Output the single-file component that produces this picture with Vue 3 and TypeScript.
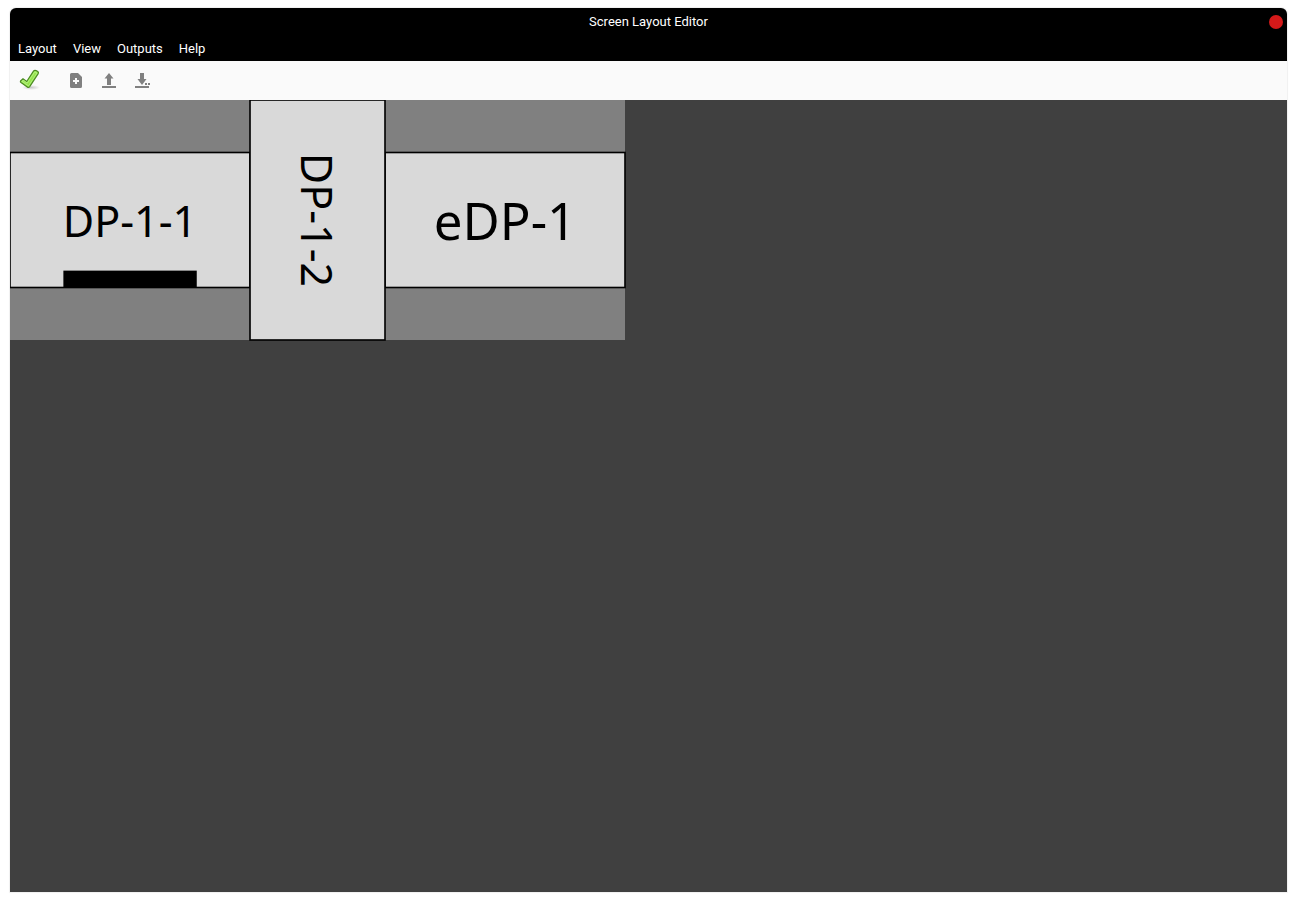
<script setup lang="ts">
interface Output {
  name: string
  x: number
  y: number
  width: number
  height: number
  rotated: boolean
  primary: boolean
  size: 'regular' | 'large'
  baseline: number
}

const menus: string[] = ['Layout', 'View', 'Outputs', 'Help']

// Coordinates are in real screen pixels; the canvas shows them at 1:8.
const outputs: Output[] = [
  { name: 'DP-1-1', x: 0, y: 420, width: 1920, height: 1080, rotated: false, primary: true, size: 'regular', baseline: 136 },
  { name: 'eDP-1', x: 3000, y: 420, width: 1920, height: 1080, rotated: false, primary: false, size: 'large', baseline: 160 },
  { name: 'DP-1-2', x: 1920, y: 0, width: 1080, height: 1920, rotated: true, primary: false, size: 'regular', baseline: 136 },
]

function place(o: Output): string {
  const move = `translate(${o.x + o.width / 2} ${o.y + o.height / 2})`
  return o.rotated ? `${move} rotate(90)` : move
}
</script>

<template>
  <div class="window">
    <header class="titlebar">
      <h1 class="title">Screen Layout Editor</h1>
      <button class="close" type="button" aria-label="Close"></button>
    </header>

    <nav class="menubar">
      <button v-for="menu in menus" :key="menu" class="menu" type="button">{{ menu }}</button>
    </nav>

    <div class="toolbar" role="toolbar">
      <button class="tool apply" type="button" aria-label="Apply">
        <svg width="24" height="24" viewBox="0 0 24 24">
          <defs>
            <radialGradient id="shade">
              <stop offset="0" stop-color="#000" stop-opacity=".2" />
              <stop offset="1" stop-color="#000" stop-opacity="0" />
            </radialGradient>
            <linearGradient id="leaf" x1="0" y1="0" x2="1" y2="1">
              <stop offset="0" stop-color="#a8ec68" />
              <stop offset="1" stop-color="#84dc35" />
            </linearGradient>
          </defs>
          <ellipse cx="13" cy="19.5" rx="9" ry="2.5" fill="url(#shade)" />
          <path d="M2.5 13 L5 10.7 L8.7 13.5 L15.5 3.2 Q16.3 2 18 2.5 L19.8 3.5 Q20.9 4.3 20.2 5.6 L11.7 18.6 Q10.7 20 9.3 19 L3 14.5 Q2 13.7 2.5 13Z" fill="url(#leaf)" stroke="#4a8a22" stroke-width="1.2" />
          <path d="M4 13.3 L5.2 12.1 L9.2 15.2 L16.7 3.9 L19 5 L10.5 17.9 L4 13.3Z" fill="none" stroke="#c0f592" stroke-width=".7" />
        </svg>
      </button>
      <button class="tool" type="button" aria-label="New">
        <svg width="24" height="24" viewBox="0 0 24 24">
          <path fill="#808080" fill-rule="evenodd" d="M7.5 5H14L18 9V18.5Q18 20 16.5 20H7.5Q6 20 6 18.5V6.5Q6 5 7.5 5ZM11 10V12H9V14H11V16H13V14H15V12H13V10Z" />
        </svg>
      </button>
      <button class="tool" type="button" aria-label="Open">
        <svg width="24" height="24" viewBox="0 0 24 24">
          <path fill="#808080" d="M12 5L16.5 10.5H14V17H10V10.500H7.5ZM5 18H19V20H5Z" />
        </svg>
      </button>
      <button class="tool" type="button" aria-label="Save as">
        <svg width="24" height="24" viewBox="0 0 24 24">
          <path fill="#808080" d="M10 5H14V11H16.5L12 17L7.5 11H10ZM5 18H19V20H5ZM15 15H17V17H15ZM18 15H20V17H18Z" />
        </svg>
      </button>
    </div>

    <main class="canvas">
      <svg class="screen" width="615" height="240" viewBox="0 0 4920 1920">
        <rect class="area" width="4920" height="1920" />
        <g v-for="o in outputs" :key="o.name">
          <rect class="output" :x="o.x" :y="o.y" :width="o.width" :height="o.height" />
          <rect v-if="o.primary" class="primary" :x="o.x + 427" :y="o.y + 945" width="1067" height="135" />
          <text class="name" :class="o.size" :transform="place(o)" :y="o.baseline">{{ o.name }}</text>
        </g>
      </svg>
    </main>
  </div>
</template>

<style>
html,
body {
  background: #fff;
}
</style>

<style scoped>
.window {
  box-sizing: border-box;
  display: flex;
  flex-direction: column;
  min-height: calc(100vh - 18px);
  margin: 8px 10px 10px;
  border-radius: 6px 6px 0 0;
  background: #000;
  box-shadow: 0 0 1px 1px #f0f0f0;
  font-family: Roboto, "Liberation Sans", sans-serif;
  font-size: 13px;
  color: #fff;
}

.titlebar {
  display: grid;
  grid-template-columns: 1fr auto 1fr;
  align-items: center;
  height: 27px;
  padding: 0 4px;
}

.title {
  grid-column: 2;
  margin: 0;
  font-size: 13px;
  font-weight: 400;
  line-height: 20px;
}

.close {
  justify-self: end;
  width: 14px;
  height: 14px;
  padding: 0;
  border: 0;
  border-radius: 50%;
  background: #d41919;
}

.menubar {
  display: flex;
  padding-top: 2px;
}

.menu {
  padding: 0 8px;
  border: 0;
  background: none;
  color: inherit;
  font: inherit;
  line-height: 24px;
}

.toolbar {
  display: flex;
  gap: 9px;
  padding: 7px 8px 8px;
  background: #fafafa;
}

.tool {
  width: 24px;
  height: 24px;
  padding: 0;
  border: 0;
  background: none;
}

.tool svg {
  display: block;
}

.apply {
  margin-right: 13px;
}

.canvas {
  flex: 1;
  overflow: hidden;
  background: #404040;
}

.screen {
  display: block;
  overflow: visible;
}

.area {
  fill: #808080;
}

.output {
  fill: #d9d9d9;
  stroke: #000;
  stroke-width: 13;
}

.primary {
  fill: #000;
}

.name {
  fill: #000;
  font-family: "Noto Sans", sans-serif;
  text-anchor: middle;
}

.regular {
  font-size: 344px;
}

.large {
  font-size: 408px;
}
</style>
